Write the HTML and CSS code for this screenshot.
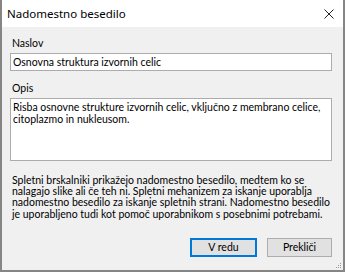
FILE: index.html
```html
<!DOCTYPE html>
<html lang="sl">
<head>
<meta charset="utf-8">
<title>Nadomestno besedilo</title>
<link rel="stylesheet" href="styles.css">
</head>
<body>
<div class="dialog">
  <div class="titlebar">
    <span class="title">Nadomestno besedilo</span>
    <svg class="close" width="10" height="10" viewBox="0 0 10 10"><path d="M0.5 0.5L9.5 9.5M9.5 0.5L0.5 9.5" stroke="#222" stroke-width="1" fill="none"/></svg>
  </div>
  <div class="body">
    <div class="label">Naslov</div>
    <div class="input">Osnovna struktura izvornih celic</div>
    <div class="label label-opis">Opis</div>
    <div class="textarea">Risba osnovne strukture izvornih celic, vključno z membrano celice, citoplazmo in nukleusom.</div>
    <p class="help">Spletni brskalniki prikažejo nadomestno besedilo, medtem ko se nalagajo slike ali če teh ni. Spletni mehanizem za iskanje uporablja nadomestno besedilo za iskanje spletnih strani. Nadomestno besedilo je uporabljeno tudi kot pomoč uporabnikom s posebnimi potrebami.</p>
    <div class="buttons">
      <div class="btn btn-primary">V redu</div>
      <div class="btn">Prekliči</div>
    </div>
  </div>
  <svg class="grip" width="6" height="6" viewBox="0 0 6 6"><g fill="#9a9a9a"><rect x="4" y="0" width="1" height="1"/><rect x="2" y="2" width="1" height="1"/><rect x="4" y="2" width="1" height="1"/><rect x="0" y="4" width="1" height="1"/><rect x="2" y="4" width="1" height="1"/><rect x="4" y="4" width="1" height="1"/></g></svg>
</div>
</body>
</html>
```
FILE: styles.css
```css
html, body {
  margin: 0;
  padding: 0;
}
body {
  width: 345px;
  height: 272px;
  overflow: hidden;
  font-family: "Lato", "Noto Sans", sans-serif;
  font-size: 10.5px;
  color: #000;
}
.dialog {
  position: relative;
  box-sizing: border-box;
  width: 345px;
  height: 272px;
  border: 2px solid #858585;
  border-top: none;
  background: #f0f0f0;
  display: flex;
  flex-direction: column;
}
.titlebar {
  height: 27px;
  background: #fff;
  display: flex;
  align-items: center;
  justify-content: space-between;
  padding: 0 9px 0 5px;
}
.title {
  font-family: "Noto Sans", sans-serif;
  font-size: 11.5px;
  color: #000;
}
.close {
  display: block;
  margin-top: 1px;
}
.body {
  flex: 1;
  padding: 10px 11px 0 8px;
  display: flex;
  flex-direction: column;
}
.label {
  line-height: 13px;
  padding-left: 2px;
}
.label-opis {
  margin-top: 11px;
}
.input {
  margin-top: 3px;
  height: 18px;
  box-sizing: border-box;
  border: 1px solid #acacac;
  background: #fff;
  padding: 0 2px;
  line-height: 16px;
}
.textarea {
  margin-top: 3px;
  height: 63px;
  box-sizing: border-box;
  border: 1px solid #acacac;
  background: #fff;
  padding: 3px 2px;
  line-height: 11.5px;
}
.help {
  margin: 14px -8px 0 0;
  padding-left: 2px;
  line-height: 11.2px;
}
.buttons {
  display: flex;
  justify-content: flex-end;
  gap: 10px;
  margin-top: 18px;
}
.btn {
  box-sizing: border-box;
  width: 65px;
  height: 19px;
  border: 1px solid #adadad;
  background: #e1e1e1;
  display: flex;
  align-items: center;
  justify-content: center;
}
.btn-primary {
  border: 2px solid #0078d7;
  width: 67px;
}
.grip {
  position: absolute;
  right: 1px;
  bottom: 1px;
}
```
